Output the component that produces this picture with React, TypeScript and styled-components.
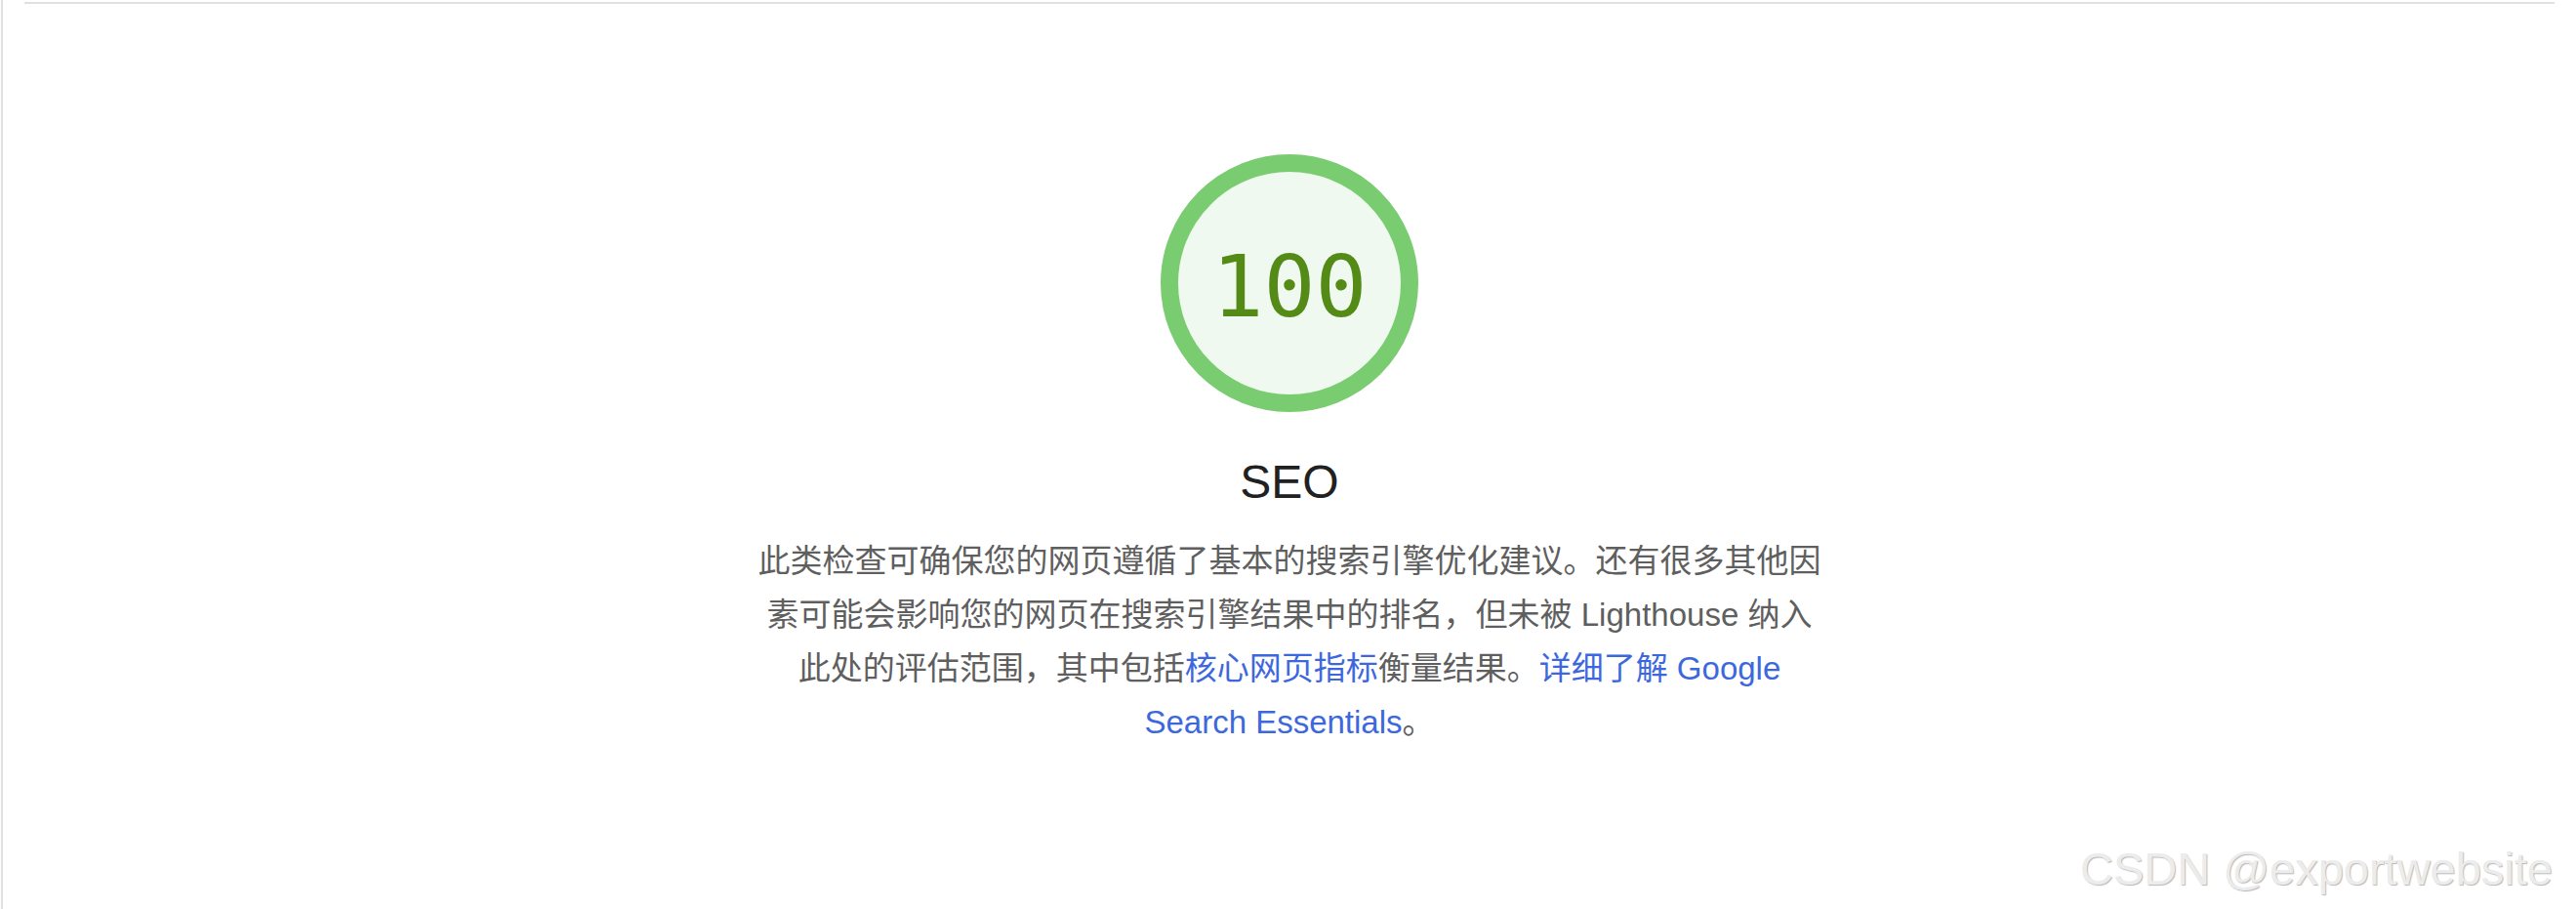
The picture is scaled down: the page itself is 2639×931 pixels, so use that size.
import React from "react";
import styled, { createGlobalStyle } from "styled-components";

const GlobalStyle = createGlobalStyle`
  html, body {
    margin: 0;
    padding: 0;
    background: #ffffff;
  }
  body {
    font-family: "Liberation Sans", Arial, "Noto Sans CJK SC", sans-serif;
  }
`;

const Page = styled.div`
  position: relative;
  box-sizing: border-box;
  min-height: 100vh;
  margin-left: 1px;
  border-left: 2px solid #e0e0e0;
  display: flex;
  flex-direction: column;
  align-items: stretch;
`;

const TopRule = styled.div`
  height: 2px;
  margin: 2px 22px 0 22px;
  background: #e0e0e0;
`;

const Category = styled.section`
  display: flex;
  flex-direction: column;
  align-items: center;
  padding-top: 154px;
`;

const Gauge = styled.div`
  box-sizing: border-box;
  width: 264px;
  height: 264px;
  border-radius: 50%;
  border: 18px solid #7acc70;
  background: #f0f9f0;
  display: flex;
  align-items: center;
  justify-content: center;
`;

const Score = styled.span`
  font-family: "DejaVu Sans Mono", "Liberation Mono", monospace;
  font-size: 88px;
  line-height: 88px;
  color: #548a16;
  padding-top: 8px;
  letter-spacing: 0;
`;

const Title = styled.h2`
  margin: 43px 0 0;
  font-family: "Liberation Sans", Arial, sans-serif;
  font-weight: 400;
  font-size: 48px;
  line-height: 58px;
  color: #212121;
`;

const Description = styled.p`
  margin: 24px 0 0;
  width: 1160px;
  text-align: center;
  font-family: "Liberation Sans", Arial, "Noto Sans CJK SC", sans-serif;
  font-size: 33px;
  line-height: 55px;
  color: #5f5f5f;
`;

const Link = styled.a`
  color: #3d68dd;
  text-decoration: none;
`;

const Watermark = styled.div`
  position: absolute;
  right: 24px;
  bottom: 18px;
  font-family: "Liberation Sans", Arial, sans-serif;
  font-size: 47px;
  line-height: 47px;
  color: #ececec;
  text-shadow: 1px 1px 1px #b8b8b8;
  white-space: nowrap;
  pointer-events: none;
`;

export default function App() {
  return (
    <>
      <GlobalStyle />
      <Page>
        <TopRule />
        <Category>
          <Gauge>
            <Score>100</Score>
          </Gauge>
          <Title>SEO</Title>
          <Description>
            此类检查可确保您的网页遵循了基本的搜索引擎优化建议。还有很多其他因
            <br />
            素可能会影响您的网页在搜索引擎结果中的排名，但未被 Lighthouse 纳入
            <br />
            此处的评估范围，其中包括<Link href="#">核心网页指标</Link>衡量结果。
            <Link href="#">
              详细了解 Google
              <br />
              Search Essentials
            </Link>
            。
          </Description>
        </Category>
        <Watermark>CSDN @exportwebsite</Watermark>
      </Page>
    </>
  );
}
